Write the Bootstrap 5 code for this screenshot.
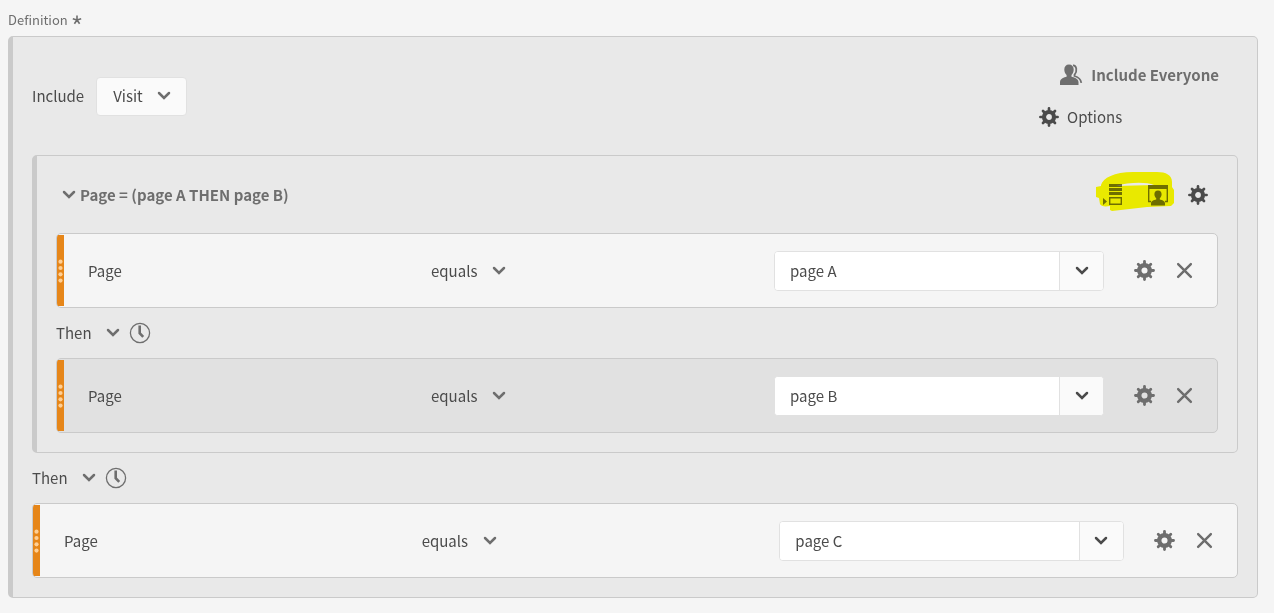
<!DOCTYPE html>
<html lang="en">
<head>
<meta charset="utf-8">
<meta name="viewport" content="width=device-width, initial-scale=1">
<title>Segment definition</title>
<link href="https://cdn.jsdelivr.net/npm/bootstrap@5.3.0/dist/css/bootstrap.min.css" rel="stylesheet">
<style>
  body { background: #f5f5f5; color: #4b4b4b; font-family: "Noto Sans CJK SC", "Noto Sans", sans-serif; font-size: 15px; line-height: 24px; }
  .field-title { font-size: 13px; line-height: 20px; color: #6e6e6e; padding: 10px 0 6px; }
  .container-box { background: #e9e9e9; border: 1px solid #cacaca; border-left-width: 5px; border-radius: 5px; }
  .outer-box { padding: 0 19px 19px; }
  .inner-box { padding: 0 19px 19px; }
  .top-bar { height: 118px; }
  .top-right { width: 180px; padding-top: 26px; margin-right: 19px; gap: 18px; }
  .box-head { height: 77px; padding: 0 10px 0 6px; }
  .plain-btn { background: none; border: 0; padding: 0; color: inherit; display: inline-flex; align-items: center; }
  .strong-gray { color: #6e6e6e; font-weight: 700; }
  .dark-icon { color: #4b4b4b; }
  .gray-icon { color: #6e6e6e; }
  .pick { appearance: none; border: 0; color: #4b4b4b; line-height: 24px; padding: 0 24px 0 0;
    background: url("data:image/svg+xml,%3Csvg xmlns='http://www.w3.org/2000/svg' viewBox='0 0 14 10'%3E%3Cpath d='M2 2l5 5 5-5' fill='none' stroke='%236e6e6e' stroke-width='2.5' stroke-linecap='round'/%3E%3C/svg%3E") no-repeat right center / 14px 10px; }
  .pick-box { width: 91px; height: 39px; padding: 0 16px; background-color: #fafafa; background-position: right 15px center; border: 1px solid #e1e1e1; border-radius: 4px; }
  .pick-equals { width: 75px; }
  .pick-then { width: 64px; }
  .then-row { height: 50px; gap: 9px; }
  .rule-row { height: 75px; background: #f5f5f5; border: 1px solid #cacaca; border-radius: 5px; overflow: hidden; padding-right: 24px; }
  .rule-alt { background: #e1e1e1; }
  .grip { width: 7px; height: 71px; margin-right: 24px; background: #e68619; color: #ffcf94; flex: none; }
  .rule-fields { display: grid; grid-template-columns: repeat(3, minmax(0, 1fr)); column-gap: 13px; align-items: center; }
  .combo { height: 40px; background: #fff; border: 1px solid #e1e1e1; border-radius: 4px; overflow: hidden; }
  .combo input { border: 0; padding: 0 15px; color: #4b4b4b; outline: 0; min-width: 0; }
  .combo button { width: 44px; flex: none; border: 0; border-left: 1px solid #e1e1e1; background: #fafafa; color: #4b4b4b; }
  .rule-tools { width: 89px; flex: none; padding-left: 30px; }
  .head-tools { gap: 19px; }
  .highlight { left: -7px; top: -13px; mix-blend-mode: multiply; pointer-events: none; }
  svg { display: block; flex: none; }
</style>
</head>
<body>
<svg width="0" height="0" class="position-absolute" aria-hidden="true">
  <symbol id="gear" viewBox="0 0 20 20">
    <g fill="none" stroke="currentColor"><circle cx="10" cy="10" r="5" stroke-width="4.2"/>
    <path d="M10 1.400v3M10 15.600v3M1.400 10h3M15.600 10h3M4 4l2 2M14 14l2 2M16 4l-2 2M6 14l-2 2" stroke-width="2.700" stroke-linecap="round"/></g>
  </symbol>
  <symbol id="cross" viewBox="0 0 16 16"><path d="M2 2l12 12M14 2L2 14" stroke="currentColor" stroke-width="2.300" stroke-linecap="round"/></symbol>
  <symbol id="chevron" viewBox="0 0 14 10"><path d="M2 2l5 5 5-5" fill="none" stroke="currentColor" stroke-width="2.500" stroke-linecap="round"/></symbol>
  <symbol id="clock" viewBox="0 0 22 22"><circle cx="11" cy="11" r="9.600" fill="none" stroke="currentColor" stroke-width="1.300"/><path d="M10.700 3.500v7.700l3.500 3.600" fill="none" stroke="currentColor" stroke-width="2.600"/></symbol>
  <symbol id="dots" viewBox="0 0 5 24"><g fill="currentColor"><circle cx="2.500" cy="2.700" r="2.100"/><circle cx="2.500" cy="9" r="2.100"/><circle cx="2.500" cy="15.300" r="2.100"/><circle cx="2.500" cy="21.600" r="2.100"/></g></symbol>
</svg>

<main class="ps-2 pe-3 pb-3">
  <div class="field-title d-flex align-items-center gap-1">Definition
    <svg width="10" height="10" viewBox="0 0 10 10" role="img" aria-label="required"><path d="M5 5V.6M5 5L.8 3.700M5 5l4.200-1.300M5 5L2.400 8.800M5 5l2.600 3.800" stroke="currentColor" stroke-width="1.600"/></svg>
  </div>
  <section class="container-box outer-box">
    <div class="top-bar d-flex align-items-center justify-content-between">
      <div class="d-flex align-items-center gap-2">
        <label for="scope" class="pe-1">Include</label>
        <select id="scope" class="pick pick-box"><option>Visit</option></select>
      </div>
      <div class="top-right align-self-start d-flex flex-column">
        <button type="button" class="plain-btn strong-gray align-self-end gap-2">
          <svg width="24" height="22" viewBox="0 0 24 22" fill="currentColor"><path d="M10 .5c3 0 4.700 2.100 4.700 5 0 2.500-1 4.300-2.200 5.600v1.600c2.400.7 6.800 1.600 7 5.300V21H1v-3c.2-3.700 4.200-4.600 6.600-5.300v-1.600C6.300 9.800 5.300 8 5.300 5.500 5.300 2.600 7 .5 10 .5z"/><path d="M14 1.300c3.500-.2 4.700 5.700 1.500 9.500v1.200c3 .9 6.200 2 6.800 6.800" fill="none" stroke="currentColor" stroke-width="1.800"/></svg>
          Include Everyone
        </button>
        <button type="button" class="plain-btn align-self-start gap-2">
          <svg width="20" height="20" class="dark-icon"><use href="#gear"/></svg>Options
        </button>
      </div>
    </div>

    <section class="container-box inner-box">
      <header class="box-head d-flex align-items-center justify-content-between">
        <button type="button" class="plain-btn strong-gray gap-1" aria-expanded="true">
          <svg width="14" height="10"><use href="#chevron"/></svg>Page = (page A THEN page B)
        </button>
        <div class="head-tools d-flex align-items-center">
          <div class="position-relative d-flex align-items-center gap-4">
            <button type="button" class="plain-btn gray-icon" aria-label="Add container">
              <svg width="21" height="22" viewBox="0 0 21 22" fill="currentColor"><path d="M7 0h13v3H7zM7 4h13v3H7zM7 8h13v3H7zM1 14l4 3.500L1 21z"/><path d="M7.700 13.700h11.600v6.600H7.700z" fill="none" stroke="currentColor" stroke-width="1.400"/></svg>
            </button>
            <button type="button" class="plain-btn gray-icon" aria-label="Visitor container">
              <svg width="22" height="22" viewBox="0 0 22 22" fill="currentColor"><path d="M1 1h20v4H1z"/><path d="M4 17.500H1.700V4M18 17.500h2.300V4" fill="none" stroke="currentColor" stroke-width="1.400"/><path d="M11 6.500c2.400 0 3.600 1.600 3.600 3.800 0 1.700-.8 3.100-1.800 4v1.200c2.300.5 5.200 1.200 5.200 4V21.500H4v-2c0-2.800 2.900-3.500 5.200-4v-1.200c-1-.9-1.800-2.300-1.800-4 0-2.200 1.200-3.800 3.600-3.800z"/></svg>
            </button>
            <svg class="highlight position-absolute" width="80" height="42" viewBox="0 0 80 42"><path fill="#ffff00" fill-rule="evenodd" d="M6 14C8 7 19 1 38 1l24 0c9 0 15 3 15 10v5l2 3v13l-3 3-24 1-35 4-2-1v-4C9 36 6 35 5 33l-1-6-3-1V16l5-1zM21 15l38-1c-7-3-25-3-38 1z"/></svg>
          </div>
          <button type="button" class="plain-btn dark-icon" aria-label="Container options"><svg width="20" height="20"><use href="#gear"/></svg></button>
        </div>
      </header>

      <div class="rule-row d-flex align-items-center">
        <div class="grip d-flex align-items-center justify-content-center"><svg width="5" height="24"><use href="#dots"/></svg></div>
        <div class="rule-fields flex-grow-1">
          <label for="value-a">Page</label>
          <div><select class="pick pick-equals" aria-label="Operator"><option>equals</option></select></div>
          <div class="combo d-flex"><input id="value-a" type="text" class="flex-grow-1" value="page A"><button type="button" class="d-flex align-items-center justify-content-center" aria-label="Show values"><svg width="14" height="10"><use href="#chevron"/></svg></button></div>
        </div>
        <div class="rule-tools gray-icon d-flex align-items-center justify-content-between">
          <button type="button" class="plain-btn" aria-label="Rule options"><svg width="21" height="21"><use href="#gear"/></svg></button>
          <button type="button" class="plain-btn" aria-label="Remove rule"><svg width="17" height="17"><use href="#cross"/></svg></button>
        </div>
      </div>

      <div class="then-row d-flex align-items-center">
        <select class="pick pick-then" aria-label="Sequence"><option>Then</option></select>
        <button type="button" class="plain-btn gray-icon" aria-label="Time limit"><svg width="22" height="22"><use href="#clock"/></svg></button>
      </div>

      <div class="rule-row rule-alt d-flex align-items-center">
        <div class="grip d-flex align-items-center justify-content-center"><svg width="5" height="24"><use href="#dots"/></svg></div>
        <div class="rule-fields flex-grow-1">
          <label for="value-b">Page</label>
          <div><select class="pick pick-equals" aria-label="Operator"><option>equals</option></select></div>
          <div class="combo d-flex"><input id="value-b" type="text" class="flex-grow-1" value="page B"><button type="button" class="d-flex align-items-center justify-content-center" aria-label="Show values"><svg width="14" height="10"><use href="#chevron"/></svg></button></div>
        </div>
        <div class="rule-tools gray-icon d-flex align-items-center justify-content-between">
          <button type="button" class="plain-btn" aria-label="Rule options"><svg width="21" height="21"><use href="#gear"/></svg></button>
          <button type="button" class="plain-btn" aria-label="Remove rule"><svg width="17" height="17"><use href="#cross"/></svg></button>
        </div>
      </div>
    </section>

    <div class="then-row d-flex align-items-center">
      <select class="pick pick-then" aria-label="Sequence"><option>Then</option></select>
      <button type="button" class="plain-btn gray-icon" aria-label="Time limit"><svg width="22" height="22"><use href="#clock"/></svg></button>
    </div>

    <div class="rule-row d-flex align-items-center">
      <div class="grip d-flex align-items-center justify-content-center"><svg width="5" height="24"><use href="#dots"/></svg></div>
      <div class="rule-fields flex-grow-1">
        <label for="value-c">Page</label>
        <div><select class="pick pick-equals" aria-label="Operator"><option>equals</option></select></div>
        <div class="combo d-flex"><input id="value-c" type="text" class="flex-grow-1" value="page C"><button type="button" class="d-flex align-items-center justify-content-center" aria-label="Show values"><svg width="14" height="10"><use href="#chevron"/></svg></button></div>
      </div>
      <div class="rule-tools gray-icon d-flex align-items-center justify-content-between">
        <button type="button" class="plain-btn" aria-label="Rule options"><svg width="21" height="21"><use href="#gear"/></svg></button>
        <button type="button" class="plain-btn" aria-label="Remove rule"><svg width="17" height="17"><use href="#cross"/></svg></button>
      </div>
    </div>
  </section>
</main>
<script src="https://cdn.jsdelivr.net/npm/bootstrap@5.3.0/dist/js/bootstrap.bundle.min.js"></script>
</body>
</html>
